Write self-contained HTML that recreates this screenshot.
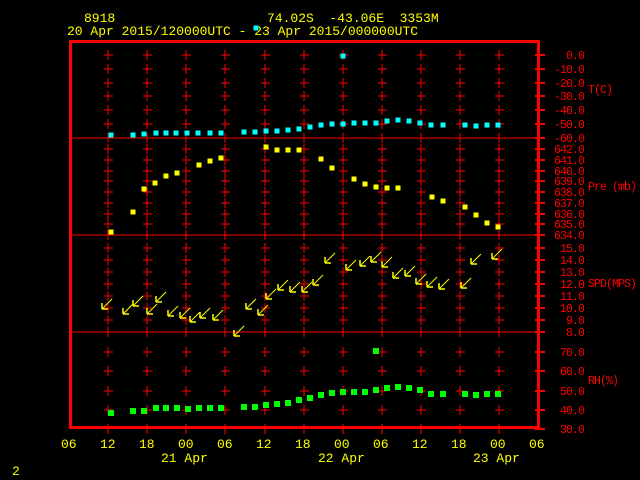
<!DOCTYPE html>
<html><head><meta charset="utf-8"><style>
html,body{margin:0;padding:0;background:#000;width:640px;height:480px;overflow:hidden}
svg{display:block}
text{font-family:"Liberation Mono","DejaVu Sans Mono",monospace;font-size:13px}
text.s{font-size:11.5px;letter-spacing:-0.9px}
</style></head><body>
<svg id="s" width="640" height="480" xmlns="http://www.w3.org/2000/svg">
<rect width="640" height="480" fill="#000"/>
<text x="84" y="22" fill="#ff0">8918</text>
<text x="267" y="22" fill="#ff0" xml:space="preserve">74.02S  -43.06E  3353M</text>
<text x="67" y="35" fill="#ff0">20 Apr 2015/120000UTC - 23 Apr 2015/000000UTC</text>
<g id="g"></g>
<text x="12" y="475" fill="#ff0">2</text>
</svg>
<script>
var g=document.getElementById('g'),h='';
function L(x1,y1,x2,y2,c,w){h+='<line x1="'+x1+'" y1="'+y1+'" x2="'+x2+'" y2="'+y2+'" stroke="'+(c||'#f00')+'" stroke-width="'+(w||1)+'"/>';}
function R(x,y,c,s){s=s||5;h+='<rect x="'+(x-s/2)+'" y="'+(y-s/2)+'" width="'+s+'" height="'+s+'" fill="'+c+'"/>';}
function T(x,y,t,c,a,cl){h+='<text x="'+x+'" y="'+y+'" fill="'+(c||'#f00')+'"'+(a?' text-anchor="end"':'')+(cl?' class="s"':'')+'>'+t+'</text>';}
h+='<rect x="70.5" y="41.5" width="468" height="386" fill="none" stroke="#f00" stroke-width="3"/>';
L(70,138,540,138);L(70,235,540,235);L(70,332,540,332);
var cols=[108,147,186,225,265,304,343,382,421,460,499];
var panels=[
 {v:[0,-10,-20,-30,-40,-50,-60],y0:55,dy:13.8},
 {v:[642,641,640,639,638,637,636,635,634],y0:149,dy:10.75},
 {v:[15,14,13,12,11,10,9,8],y0:248,dy:12},
 {v:[70,60,50,40,30],y0:352,dy:19.3}];
panels.forEach(function(p){p.v.forEach(function(v,i){var y=Math.round(p.y0+i*p.dy);
 L(535,y,545,y,'#f00',2);T(584,y+4,v.toFixed(1),'#f00',1,1);
 if(y<425&&y>44&&!(y==138||y==235||y==332)){cols.forEach(function(x){L(x,y-5,x,y+5);L(x-4,y,x+5,y);});}
 else cols.forEach(function(x){L(x,y-5,x,y+5);});
});});
T(588,93,'T(C)',0,0,1);T(588,190,'Pre (mb)',0,0,1);T(588,287,'SPD(MPS)',0,0,1);T(588,384,'RH(%)',0,0,1);
var xl=['06','12','18','00','06','12','18','00','06','12','18','00','06'];
xl.forEach(function(t,i){T(69+i*39-8,448,t,'#ff0');});
T(161,462,'21 Apr','#ff0');T(318,462,'22 Apr','#ff0');T(473,462,'23 Apr','#ff0');
var cy=[[111,135],[133,135],[144,134],[156,133],[166,133],[176,133],[187,133],[198,133],[210,133],[221,133],[244,132],[255,132],[266,131],[277,131],[288,130],[299,129],[310,127],[321,125],[332,124],[343,124],[354,123],[365,123],[376,123],[387,121],[398,120],[409,121],[420,123],[431,125],[443,125],[465,125],[476,126],[487,125],[498,125],[256,28],[343,56]];
cy.forEach(function(p){R(p[0],p[1],'#0ff')});
var ye=[[111,232],[133,212],[144,189],[155,183],[166,176],[177,173],[199,165],[210,161],[221,158],[266,147],[277,150],[288,150],[299,150],[321,159],[332,168],[354,179],[365,184],[376,187],[387,188],[398,188],[432,197],[443,201],[465,207],[476,215],[487,223],[498,227]];
ye.forEach(function(p){R(p[0],p[1],'#ff0')});
var gr=[[111,413],[133,411],[144,411],[156,408],[166,408],[177,408],[188,409],[199,408],[210,408],[221,408],[244,407],[255,407],[266,405],[277,404],[288,403],[299,400],[310,398],[321,395],[332,393],[343,392],[354,392],[365,392],[376,390],[387,388],[398,387],[409,388],[420,390],[431,394],[443,394],[465,394],[476,395],[487,394],[498,394],[376,351]];
gr.forEach(function(p){R(p[0],p[1],'#0f0',6)});
var ar=[[102,309],[123,314],[133,306],[147,314],[156,302],[168,316],[180,318],[190,322],[200,318],[213,320],[234,336],[246,309],[258,315],[266,299],[278,290],[290,292],[302,292],[313,285],[325,263],[346,270],[360,266],[371,262],[382,267],[393,278],[405,276],[416,284],[427,287],[439,289],[461,288],[471,264],[492,259]];
ar.forEach(function(p){var x=p[0],y=p[1];L(x,y,x+10,y-10,'#ff0');L(x,y,x,y-6,'#ff0',1.5);L(x,y,x+6,y,'#ff0',1.5);});
g.innerHTML=h;
</script>
</body></html>
